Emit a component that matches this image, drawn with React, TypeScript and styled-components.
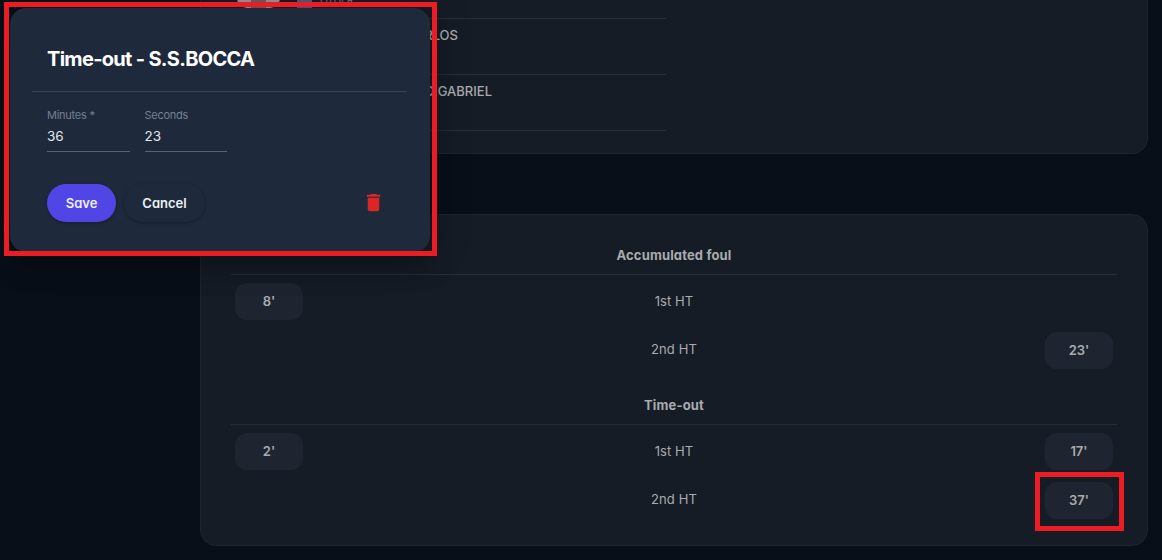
import React from "react";
import styled, { createGlobalStyle } from "styled-components";

const Global = createGlobalStyle`
  *, *::before, *::after { box-sizing: border-box; }
  body {
    margin: 0;
    background: #090f19;
    color: #a9abae;
    font-family: Inter, "Liberation Sans", sans-serif;
    font-size: 13px;
    font-feature-settings: "cv11";
    overflow: hidden;
  }
`;

const Page = styled.main`
  position: relative;
  height: 560px;
  padding: 0 14px 14px 200px;
  overflow: hidden;
  display: flex;
  flex-direction: column;
  gap: 60px;
`;

const Card = styled.section`
  background: #151c26;
  border: 1px solid #1d242e;
  border-radius: 16px;
`;

const RosterCard = styled(Card)`
  height: 154px;
  flex: none;
  border-top: 0;
  border-radius: 0 0 16px 16px;
  padding: 0 30px;
`;

const EventsCard = styled(Card)`
  height: 332px;
  flex: none;
  padding: 22px 30px 0;
  display: flex;
  flex-direction: column;
  gap: 14px;
`;

const Roster = styled.div`
  width: 435px;
`;

const Staff = styled.div`
  display: flex;
  height: 19px;
  padding-left: 6px;
  border-bottom: 1px solid #262d37;
`;

const Avatar = styled.div`
  width: 43px;
  height: 43px;
  margin: -35px 17px 0 0;
  border-radius: 10px;
  background: linear-gradient(90deg, #9b9b9b 14px, #666 14px 29px, #9b9b9b 29px);
`;

const Flag = styled.div`
  width: 15px;
  height: 8px;
  margin-right: 8px;
  background: #4d5f85;
`;

const Role = styled.span`
  margin-top: -6px;
  font-size: 10.5px;
  line-height: 14px;
  letter-spacing: -0.45px;
  color: #747980;
`;

const Player = styled.div<{ $end: number }>`
  display: flex;
  justify-content: flex-end;
  width: 435px;
  height: 56px;
  padding: 7px ${(p) => p.$end}px 0 0;
  border-bottom: 1px solid #262d37;
  font-weight: 500;
  line-height: 18px;
`;

const SectionTitle = styled.h3`
  margin: 0;
  height: 38px;
  border-bottom: 1px solid #262d37;
  font-size: 13px;
  font-weight: 700;
  line-height: 37px;
  letter-spacing: 0.15px;
  text-align: center;
`;

const HalfRow = styled.div`
  display: grid;
  grid-template-columns: 68px 1fr 68px;
  align-items: start;
  height: 49px;
  padding: 8px 4px 0;
`;

const HalfLabel = styled.span<{ $lift?: boolean }>`
  line-height: ${(p) => (p.$lift ? 35 : 37)}px;
  letter-spacing: 0.1px;
  text-align: center;
`;

const Minute = styled.button`
  height: 37px;
  padding: 0 0 2px;
  border: 0;
  border-radius: 12px;
  background: #1e2530;
  color: #a9abae;
  font: inherit;
  font-feature-settings: inherit;
  font-weight: 600;
`;

const Dialog = styled.div`
  position: absolute;
  left: 10px;
  top: 8px;
  width: 420px;
  height: 244px;
  padding: 24px 23px 24px 22px;
  border-radius: 16px;
  background: #1e293b;
  color: #e2e8f0;
  box-shadow: 0 20px 25px 0 rgba(0, 0, 0, 0.22), 0 0 40px 0 rgba(0, 0, 0, 0.25);
`;

const DialogTitle = styled.h2`
  margin: 0;
  height: 60px;
  padding-left: 15px;
  border-bottom: 1px solid #384253;
  color: #fff;
  font-size: 20px;
  font-weight: 700;
  line-height: 55px;
  letter-spacing: -0.7px;
`;

const Fields = styled.div`
  display: flex;
  gap: 15px;
  padding: 15px 15px 0;
`;

const Field = styled.label`
  display: flex;
  flex-direction: column;
  width: 82.5px;
  height: 45px;
  border-bottom: 1px solid #586374;
`;

const FieldLabel = styled.span`
  color: #748092;
  font-size: 11px;
  line-height: 16px;
  letter-spacing: -0.25px;
`;

const FieldValue = styled.span`
  font-size: 13.5px;
  line-height: 27px;
`;

const Actions = styled.div`
  display: flex;
  align-items: center;
  gap: 8px;
  padding: 32px 22px 0 15px;
`;

const Pill = styled.button<{ $primary?: boolean }>`
  width: ${(p) => (p.$primary ? 69 : 81)}px;
  height: 38px;
  padding: 0;
  border: 0;
  border-radius: 19px;
  background: ${(p) => (p.$primary ? "#4f46e5" : "#1e293b")};
  color: ${(p) => (p.$primary ? "#eeeefc" : "#eef1f5")};
  box-shadow: 0 1px 3px rgba(0, 0, 0, 0.3);
  font: inherit;
  font-feature-settings: inherit;
  font-weight: 600;
`;

const Trash = styled.svg`
  width: 23px;
  height: 23px;
  margin: 0 0 2px auto;
  fill: #dc2626;
`;

const Highlight = styled.div<{ $x: number; $y: number; $w: number; $h: number }>`
  position: absolute;
  left: ${(p) => p.$x}px;
  top: ${(p) => p.$y}px;
  width: ${(p) => p.$w}px;
  height: ${(p) => p.$h}px;
  border: 5px solid #ed1c24;
  pointer-events: none;
`;

type Half = { label: string; home?: string; away?: string };

const sections: { title: string; halves: Half[] }[] = [
  { title: "Accumulated foul", halves: [{ label: "1st HT", home: "8'" }, { label: "2nd HT", away: "23'" }] },
  { title: "Time-out", halves: [{ label: "1st HT", home: "2'", away: "17'" }, { label: "2nd HT", away: "37'" }] },
];

const Slot = ({ value }: { value?: string }) => (value ? <Minute>{value}</Minute> : <span />);

export default function App() {
  return (
    <Page>
      <Global />
      <RosterCard>
        <Roster>
          <Staff>
            <Avatar />
            <Flag />
            <Role>OTHER</Role>
          </Staff>
          <Player $end={208}>RLOS</Player>
          <Player $end={174}>O GABRIEL</Player>
        </Roster>
      </RosterCard>
      <EventsCard>
        {sections.map((s) => (
          <div key={s.title}>
            <SectionTitle>{s.title}</SectionTitle>
            {s.halves.map((h, i) => (
              <HalfRow key={h.label}>
                <Slot value={h.home} />
                <HalfLabel $lift={i === 1}>{h.label}</HalfLabel>
                <Slot value={h.away} />
              </HalfRow>
            ))}
          </div>
        ))}
      </EventsCard>
      <Dialog>
        <DialogTitle>Time-out - S.S.BOCCA</DialogTitle>
        <Fields>
          <Field>
            <FieldLabel>Minutes *</FieldLabel>
            <FieldValue>36</FieldValue>
          </Field>
          <Field>
            <FieldLabel>Seconds</FieldLabel>
            <FieldValue>23</FieldValue>
          </Field>
        </Fields>
        <Actions>
          <Pill $primary>Save</Pill>
          <Pill>Cancel</Pill>
          <Trash viewBox="0 0 24 24">
            <path d="M6 19c0 1.1.9 2 2 2h8c1.1 0 2-.9 2-2V7H6v12zM19 4h-3.5l-1-1h-5l-1 1H5v2h14V4z" />
          </Trash>
        </Actions>
      </Dialog>
      <Highlight $x={4} $y={2} $w={433} $h={254} />
      <Highlight $x={1035} $y={472} $w={89} $h={59} />
    </Page>
  );
}
